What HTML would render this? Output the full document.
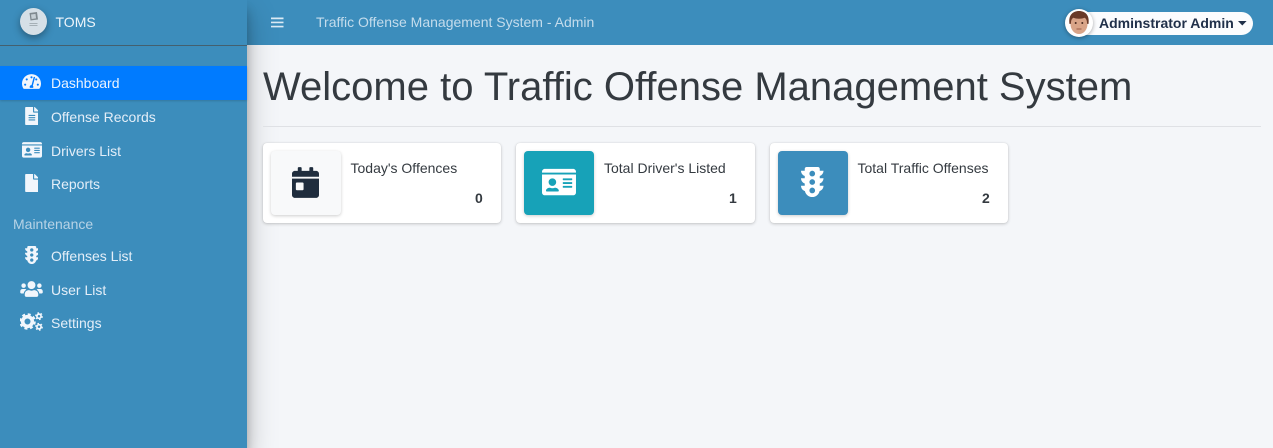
<!DOCTYPE html>
<html lang="en">
<head>
<meta charset="utf-8">
<title>Traffic Offense Management System</title>
<style>
html,body{margin:0;padding:0}
body{position:relative;width:1273px;height:448px;overflow:hidden;background:#f4f6f9;font-family:"Liberation Sans",sans-serif;font-size:14px;color:#343a40}
.abs,.t,svg{position:absolute}
.t{white-space:nowrap;line-height:20px}
#nav{position:absolute;left:0;top:0;width:1273px;height:45px;background:#3c8dbc}
#side{position:absolute;left:0;top:0;width:247px;height:448px;background:#3c8dbc;box-shadow:0 14px 28px rgba(0,0,0,.25),0 10px 10px rgba(0,0,0,.22)}
#rule{position:absolute;left:0;top:45px;width:247px;height:1px;background:#44606f}
#active{position:absolute;left:0;top:66px;width:247px;height:34px;background:#007bff;box-shadow:0 1px 2px rgba(0,0,0,.15)}
.m{left:51px;color:#e4eef8}
.card{position:absolute;top:143px;height:80px;background:#fff;border-radius:4px;box-shadow:0 0 1px rgba(0,0,0,.13),0 1px 3px rgba(0,0,0,.2)}
.box{position:absolute;top:151px;width:70px;height:64px;border-radius:4px;box-shadow:0 1px 3px rgba(0,0,0,.2)}
.num{font-weight:700;color:#343a40}
</style>
</head>
<body>
<svg width="0" height="0" style="position:absolute">
<defs>
<path id="idc" d="M528 32H48C21.500 32 0 53.500 0 80v16h576V80c0-26.500-21.500-48-48-48zM0 432c0 26.500 21.500 48 48 48h480c26.500 0 48-21.500 48-48V128H0v304zm352-232c0-4.400 3.600-8 8-8h144c4.400 0 8 3.600 8 8v16c0 4.400-3.600 8-8 8H360c-4.400 0-8-3.600-8-8v-16zm0 64c0-4.400 3.600-8 8-8h144c4.400 0 8 3.600 8 8v16c0 4.400-3.600 8-8 8H360c-4.400 0-8-3.600-8-8v-16zm0 64c0-4.400 3.600-8 8-8h144c4.400 0 8 3.600 8 8v16c0 4.400-3.600 8-8 8H360c-4.400 0-8-3.600-8-8v-16zM176 192c35.300 0 64 28.700 64 64s-28.700 64-64 64-64-28.700-64-64 28.700-64 64-64zM67.100 396.200C75.500 370.500 99.600 352 128 352h8.200c12.300 5.100 25.700 8 39.800 8s27.600-2.900 39.800-8h8.200c28.400 0 52.500 18.500 60.900 44.200 3.200 9.900-5.200 19.800-15.600 19.800H82.700c-10.400 0-18.800-10-15.600-19.800z"/>
<path id="tl" d="M384 192h-64v-37.880c37.176-13.214 64-48.391 64-90.120h-64V32c0-17.673-14.327-32-32-32H96C78.327 0 64 14.327 64 32v32H0c0 41.729 26.824 76.906 64 90.120V192H0c0 41.729 26.824 76.906 64 90.120V320H0c0 42.813 28.230 78.600 67.026 90.695C79.648 468.648 131.227 512 192 512c60.773 0 112.352-43.352 124.974-101.305C355.770 398.600 384 362.813 384 320h-64v-37.880c37.176-13.214 64-48.391 64-90.120zM192 448c-26.510 0-48-21.490-48-48 0-26.510 21.490-48 48-48 26.510 0 48 21.490 48 48 0 26.510-21.490 48-48 48zm0-144c-26.510 0-48-21.490-48-48 0-26.510 21.490-48 48-48 26.510 0 48 21.490 48 48 0 26.510-21.490 48-48 48zm0-144c-26.510 0-48-21.490-48-48 0-26.510 21.490-48 48-48 26.510 0 48 21.490 48 48 0 26.510-21.490 48-48 48z"/>
</defs>
</svg>

<div id="nav"></div>
<svg style="left:271px;top:16px" width="13" height="13" viewBox="0 0 13 13"><path d="M0 1.500h12.500v1.700H0zM0 5.600h12.500v1.700H0zM0 9.700h12.500v1.700H0z" fill="#dcebf5"/></svg>
<div class="t" style="left:316px;top:12px;color:#c4dcec">Traffic Offense Management System - Admin</div>

<div class="abs" style="left:1066px;top:12px;width:187px;height:23px;background:#fbfcfe;border-radius:12px"></div>
<svg style="left:1065px;top:9px;filter:drop-shadow(0 1px 2px rgba(0,0,0,.35))" width="28" height="28" viewBox="0 0 28 28">
<circle cx="14" cy="14" r="14" fill="#fff"/>
<ellipse cx="14" cy="15" rx="8.500" ry="10" fill="#d9a488"/>
<path d="M4.500 15C3 5 9 2 14 2s11 3 9.500 13l-1.500-.2c.2-3-.8-5-2.300-6-3 1.300-8.400 1.300-11.400 0-1.600 1-2.500 3-2.300 6z" fill="#6a3a28"/>
<circle cx="10.700" cy="14" r="1" fill="#4a2a20"/><circle cx="17.300" cy="14" r="1" fill="#4a2a20"/>
<path d="M11.500 20h5" stroke="#9a5b48" stroke-width="1"/>
</svg>
<div class="t" style="left:1099px;top:13px;font-weight:700;color:#20304a">Adminstrator Admin</div>
<svg style="left:1238px;top:21px" width="9" height="5" viewBox="0 0 9 5"><path d="M0 0h8.600L4.300 4.500z" fill="#20304a"/></svg>

<div id="side"></div>
<div id="rule"></div>
<svg style="left:17px;top:5px;filter:drop-shadow(0 3px 4px rgba(0,0,0,.35))" width="33" height="33" viewBox="0 0 33 33">
<circle cx="16.500" cy="16.500" r="13.500" fill="#d6e0e7"/>
<path d="M12.500 8l7.500-1 1 7.500-7.500 1z" fill="#7f8a90"/>
<path d="M14 9.500l4.500-.6.600 4.500-4.500.6z" fill="#c6d0d6"/>
<path d="M12.500 18.500h8M12.500 20.500h8" stroke="#a5b0b6" stroke-width="1"/>
</svg>
<div class="t" style="left:55.500px;top:12px;color:#eef5fb">TOMS</div>

<div id="active"></div>

<!-- tachometer -->
<svg style="left:22px;top:73px" width="19" height="17" viewBox="0 0 576 512">
<path fill="#f1f6fc" d="M288 32C128.940 32 0 160.940 0 320c0 52.800 14.250 102.260 39.060 144.800 5.610 9.620 16.300 15.200 27.440 15.200h443c11.140 0 21.830-5.580 27.440-15.200C561.750 422.260 576 372.800 576 320c0-159.060-128.940-288-288-288zm0 64c17.670 0 32 14.330 32 32s-14.330 32-32 32-32-14.330-32-32 14.330-32 32-32zM96 384c-17.670 0-32-14.330-32-32s14.330-32 32-32 32 14.330 32 32-14.330 32-32 32zm48-160c-17.670 0-32-14.330-32-32s14.330-32 32-32 32 14.330 32 32-14.330 32-32 32zm246.770-72.410l-61.330 230.080C338.270 391.450 344 404.920 344 420c0 10.300-2.970 19.900-7.980 28H239.980C234.970 439.900 232 430.300 232 420c0-30.930 25.070-56 56-56 .4 0 .76.100 1.150.110l61.270-229.800c3.410-12.800 16.580-20.430 29.370-17.010 12.790 3.400 20.390 16.580 16.980 29.290zM480 384c-17.670 0-32-14.330-32-32s14.330-32 32-32 32 14.330 32 32-14.330 32-32 32zM432 224c-17.670 0-32-14.330-32-32s14.330-32 32-32 32 14.330 32 32-14.330 32-32 32z"/>
</svg>
<div class="t m" style="top:73px;color:#eaf3ff">Dashboard</div>

<!-- file-alt -->
<svg style="left:24.500px;top:106.500px" width="13.800" height="18" viewBox="0 0 384 512"><path fill="#f1f6fc" d="M224 136V0H24C10.700 0 0 10.700 0 24v464c0 13.300 10.700 24 24 24h336c13.300 0 24-10.700 24-24V160H248c-13.200 0-24-10.800-24-24zm64 236c0 6.600-5.400 12-12 12H108c-6.600 0-12-5.400-12-12v-8c0-6.600 5.400-12 12-12h168c6.600 0 12 5.400 12 12v8zm0-64c0 6.600-5.400 12-12 12H108c-6.600 0-12-5.400-12-12v-8c0-6.600 5.400-12 12-12h168c6.600 0 12 5.400 12 12v8zm0-72v8c0 6.600-5.400 12-12 12H108c-6.600 0-12-5.400-12-12v-8c0-6.600 5.400-12 12-12h168c6.600 0 12 5.400 12 12zm96-114.100v6.100H256V0h6.100c6.400 0 12.500 2.500 17 7l97.900 98c4.500 4.500 7 10.600 7 16.900z"/></svg>
<div class="t m" style="top:107px">Offense Records</div>

<!-- id-card sidebar -->
<svg style="left:21.500px;top:140.500px" width="20" height="17.800" viewBox="0 0 576 512"><use href="#idc" fill="#f1f6fc"/></svg>
<div class="t m" style="top:141px">Drivers List</div>

<!-- file -->
<svg style="left:24.500px;top:173.500px" width="13.800" height="18" viewBox="0 0 384 512"><path fill="#f1f6fc" d="M224 136V0H24C10.700 0 0 10.700 0 24v464c0 13.300 10.700 24 24 24h336c13.300 0 24-10.700 24-24V160H248c-13.200 0-24-10.800-24-24zm160-14.100v6.100H256V0h6.100c6.400 0 12.500 2.500 17 7l97.900 98c4.500 4.500 7 10.600 7 16.900z"/></svg>
<div class="t m" style="top:174px">Reports</div>

<div class="t" style="left:13px;top:214px;color:#b7d3e6">Maintenance</div>

<!-- traffic light sidebar -->
<svg style="left:24.500px;top:245.500px" width="13.500" height="18" viewBox="0 0 384 512"><use href="#tl" fill="#f1f6fc"/></svg>
<div class="t m" style="top:246px">Offenses List</div>

<!-- users -->
<svg style="left:20px;top:280px" width="23" height="18" viewBox="0 0 640 512"><path fill="#f1f6fc" d="M96 224c35.300 0 64-28.700 64-64s-28.700-64-64-64-64 28.700-64 64 28.700 64 64 64zm448 0c35.300 0 64-28.700 64-64s-28.700-64-64-64-64 28.700-64 64 28.700 64 64 64zm32 32h-64c-17.600 0-33.500 7.100-45.100 18.600 40.300 22.100 68.900 62 75.100 109.400h66c17.700 0 32-14.300 32-32v-32c0-35.300-28.700-64-64-64zm-256 0c61.900 0 112-50.100 112-112S381.900 32 320 32 208 82.100 208 144s50.100 112 112 112zm76.800 32h-8.300c-20.800 10-43.900 16-68.500 16s-47.600-6-68.500-16h-8.300C179.600 288 128 339.600 128 403.200V432c0 26.500 21.500 48 48 48h288c26.500 0 48-21.500 48-48v-28.800c0-63.600-51.600-115.200-115.200-115.200zm-223.700-13.400C161.500 263.100 145.600 256 128 256H64c-35.300 0-64 28.700-64 64v32c0 17.700 14.300 32 32 32h65.900c6.300-47.400 34.900-87.300 75.200-109.400z"/></svg>
<div class="t m" style="top:280px">User List</div>

<!-- cogs -->
<svg style="left:20px;top:312px" width="23" height="19" viewBox="0 0 23 19">
<g fill="none" stroke="#f1f6fc">
<circle cx="7.500" cy="9.500" r="4.800" stroke-width="3.600"/>
<circle cx="7.500" cy="9.500" r="7" stroke-width="2.600" stroke-dasharray="2.900 2.600"/>
<circle cx="19" cy="4.200" r="2.100" stroke-width="1.700"/>
<circle cx="19" cy="4.200" r="3.300" stroke-width="1.200" stroke-dasharray="1.700 1.750"/>
<circle cx="19" cy="14.800" r="2.100" stroke-width="1.700"/>
<circle cx="19" cy="14.800" r="3.300" stroke-width="1.200" stroke-dasharray="1.700 1.750"/>
</g>
</svg>
<div class="t m" style="top:313px">Settings</div>

<!-- content -->
<div class="t" style="left:263px;top:62.500px;font-size:40px;line-height:48px;color:#343a40">Welcome to Traffic Offense Management System</div>
<div class="abs" style="left:263px;top:126px;width:998px;height:1px;background:#dfe1e5"></div>

<div class="card" style="left:263px;width:238px"></div>
<div class="box" style="left:271px;background:#f8f9fa"></div>
<svg style="left:292px;top:167px" width="27" height="31" viewBox="0 0 448 512">
<path fill="#1f2d3d" d="M0 464c0 26.500 21.500 48 48 48h352c26.500 0 48-21.500 48-48V192H0v272zm64-192c0-8.800 7.200-16 16-16h96c8.800 0 16 7.200 16 16v96c0 8.800-7.200 16-16 16H80c-8.800 0-16-7.200-16-16v-96zM400 64h-48V16c0-8.800-7.200-16-16-16h-32c-8.800 0-16 7.200-16 16v48H160V16c0-8.800-7.200-16-16-16h-32c-8.800 0-16 7.200-16 16v48H48C21.500 64 0 85.500 0 112v48h448v-48c0-26.500-21.500-48-48-48z"/>
</svg>
<div class="t" style="left:350.500px;top:158px">Today's Offences</div>
<div class="t num" style="left:475px;top:188px">0</div>

<div class="card" style="left:516px;width:239px"></div>
<div class="box" style="left:524px;background:#17a2b8"></div>
<svg style="left:542px;top:167px" width="34" height="30.200" viewBox="0 0 576 512"><use href="#idc" fill="#fff"/></svg>
<div class="t" style="left:604px;top:158px">Total Driver's Listed</div>
<div class="t num" style="left:729px;top:188px">1</div>

<div class="card" style="left:770px;width:238px"></div>
<div class="box" style="left:778px;background:#3c8dbc"></div>
<svg style="left:801px;top:167px" width="22.500" height="30" viewBox="0 0 384 512"><use href="#tl" fill="#fff"/></svg>
<div class="t" style="left:857.500px;top:158px">Total Traffic Offenses</div>
<div class="t num" style="left:982px;top:188px">2</div>
</body>
</html>
